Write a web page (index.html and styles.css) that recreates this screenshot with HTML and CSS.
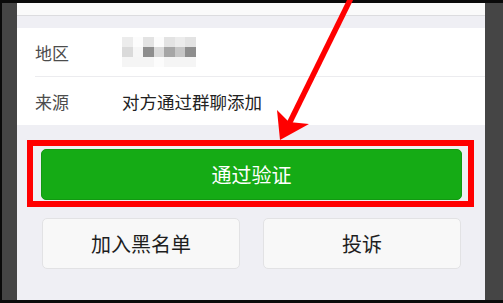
FILE: index.html
```html
<!DOCTYPE html>
<html lang="zh">
<head>
<meta charset="utf-8">
<link rel="stylesheet" href="styles.css">
</head>
<body>
<div class="frame">
  <div class="screen">
    <div class="topbar"></div>
    <div class="info">
      <div class="row">
        <span class="label">地区</span>
        <div class="blur">
          <i class="b2"></i><i class="b0"></i><i class="b3"></i><i class="b0"></i><i class="b3"></i><i class="b2"></i><i class="b3"></i>
          <i class="m3"></i><i class="m0"></i><i class="m1"></i><i class="m3"></i><i class="m2"></i><i class="m4"></i><i class="m1"></i>
          <i class="b1"></i><i class="b1"></i><i class="b1"></i><i class="b0"></i><i class="b1"></i><i class="b1"></i><i class="b1"></i>
        </div>
      </div>
      <div class="row">
        <span class="label">来源</span>
        <span class="value">对方通过群聊添加</span>
      </div>
    </div>
    <div class="actions">
      <button class="primary">通过验证</button>
      <div class="pair">
        <button class="secondary">加入黑名单</button>
        <button class="secondary">投诉</button>
      </div>
    </div>
    <div class="highlight"></div>
  </div>
</div>
<svg class="arrow" width="503" height="303" viewBox="0 0 503 303">
  <line x1="352" y1="-4" x2="289" y2="124" stroke="#ff0000" stroke-width="5.5"/>
  <polygon points="280,140 277,110 289,122 309,124" fill="#ff0000"/>
</svg>
</body>
</html>
```
FILE: styles.css
```css
html, body {
  margin: 0;
  padding: 0;
}
body {
  width: 503px;
  height: 303px;
  overflow: hidden;
  background: #444444;
  font-family: "Noto Sans CJK SC", "Noto Sans", sans-serif;
  position: relative;
}
.frame {
  box-sizing: border-box;
  height: 303px;
  width: 503px;
  border-top: 3px solid #0a0a0a;
  border-left: 2px solid #0a0a0a;
  border-bottom: 3px solid #0a0a0a;
  padding-left: 15px;
  padding-right: 18px;
  display: flex;
  background: #454545;
}
.screen {
  position: relative;
  width: 468px;
  background: #efeff4;
  display: flex;
  flex-direction: column;
}
.topbar {
  height: 12px;
  background: #fafafa;
  border-bottom: 1px solid #dcdcdf;
  margin-bottom: 12px;
}
.info {
  background: #ffffff;
}
.row {
  height: 48px;
  margin-left: 18px;
  display: flex;
  align-items: center;
  font-size: 17px;
}
.row + .row {
  border-top: 1px solid #ececef;
}
.label {
  width: 87px;
  color: #4c4c4c;
}
.value {
  color: #222222;
  font-size: 17.5px;
}
.blur {
  display: grid;
  grid-template-columns: repeat(7, 10.5px);
  grid-template-rows: 10px 10px 10px;
}
.blur i {
  display: block;
}
.b0 { background: #fcfcfc; }
.b1 { background: #f5f5f5; }
.b2 { background: #ececec; }
.b3 { background: #e3e3e3; }
.m0 { background: #f6f6f6; }
.m1 { background: #8e8e8e; }
.m2 { background: #a6a6a6; }
.m3 { background: #dadada; }
.m4 { background: #c6c6c6; }
.actions {
  padding: 24px 23px 0 24px;
  display: flex;
  flex-direction: column;
}
button {
  font-family: "Noto Sans CJK SC", "Noto Sans", sans-serif;
  font-size: 20px;
  border-radius: 5px;
  cursor: pointer;
  padding: 0;
}
.primary {
  height: 51px;
  background: #15ab15;
  border: 1px solid #129912;
  color: #ffffff;
}
.pair {
  margin-top: 18px;
  display: flex;
  gap: 23px;
  padding-left: 1px;
}
.secondary {
  width: 198px;
  height: 51px;
  background: #f8f8f8;
  border: 1px solid #e2e2e4;
  color: #1e1e1e;
}
.highlight {
  position: absolute;
  left: 10px;
  top: 137px;
  width: 447px;
  height: 67px;
  box-sizing: border-box;
  border: 6px solid #ff0000;
  pointer-events: none;
}
.arrow {
  position: absolute;
  left: 0;
  top: 0;
}
```
